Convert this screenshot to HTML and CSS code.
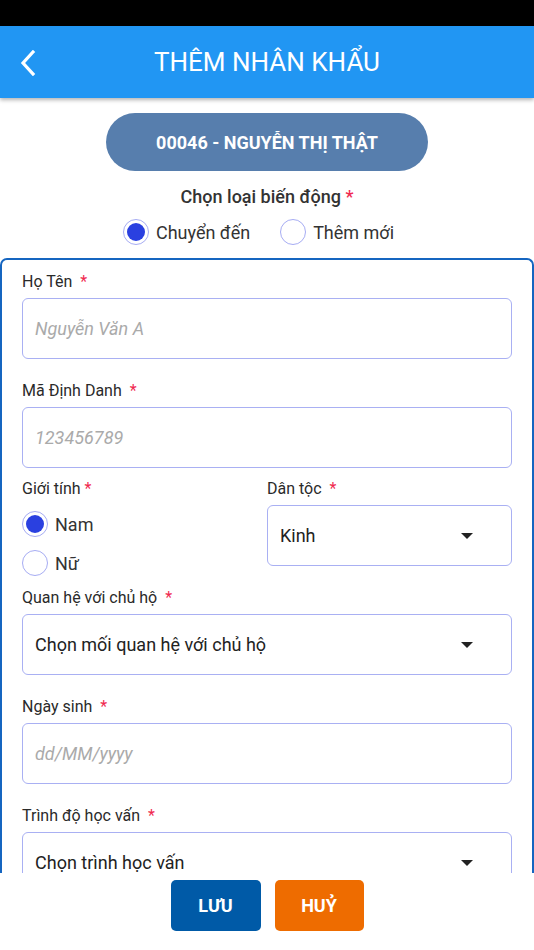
FILE: index.html
```html
<!DOCTYPE html>
<html lang="vi">
<head>
  <meta charset="UTF-8">
  <title>Thêm nhân khẩu</title>
  <meta name="viewport" content="width=device-width, initial-scale=1.0">
  <link rel="stylesheet" href="styles.css">
</head>
<body>
  <div class="screen">
    <div class="status-bar"></div>

    <div class="header">
      <a class="back" href="#">
        <svg width="16" height="26" viewBox="0 0 16 26"><path d="M13 2 L3 13 L13 24" fill="none" stroke="#fff" stroke-width="3.2" stroke-linecap="square"/></svg>
      </a>
      <h1>THÊM NHÂN KHẨU</h1>
    </div>

    <div class="content">
      <div class="household">00046 - NGUYỄN THỊ THẬT</div>

      <div class="type-title">Chọn loại biến động <span class="req">*</span></div>
      <div class="type-options">
        <label class="radio"><span class="dot checked"></span>Chuyển đến</label>
        <label class="radio"><span class="dot"></span>Thêm mới</label>
      </div>

      <div class="card">
        <div class="field">
          <div class="label">Họ Tên <span class="req gap">*</span></div>
          <div class="input placeholder">Nguyễn Văn A</div>
        </div>

        <div class="field tight">
          <div class="label">Mã Định Danh <span class="req gap">*</span></div>
          <div class="input placeholder">123456789</div>
        </div>

        <div class="field split">
          <div class="col">
            <div class="label">Giới tính <span class="req">*</span></div>
            <div class="gender">
              <label class="radio"><span class="dot checked"></span>Nam</label>
              <label class="radio"><span class="dot"></span>Nữ</label>
            </div>
          </div>
          <div class="col">
            <div class="label">Dân tộc <span class="req gap">*</span></div>
            <div class="input select">Kinh<span class="caret"></span></div>
          </div>
        </div>

        <div class="field">
          <div class="label">Quan hệ với chủ hộ <span class="req gap">*</span></div>
          <div class="input select">Chọn mối quan hệ với chủ hộ<span class="caret"></span></div>
        </div>

        <div class="field">
          <div class="label">Ngày sinh <span class="req gap">*</span></div>
          <div class="input placeholder">dd/MM/yyyy</div>
        </div>

        <div class="field">
          <div class="label">Trình độ học vấn <span class="req gap">*</span></div>
          <div class="input select">Chọn trình học vấn<span class="caret"></span></div>
        </div>
      </div>
    </div>

    <div class="footer">
      <button class="btn save">LƯU</button>
      <button class="btn cancel">HUỶ</button>
    </div>
  </div>
</body>
</html>
```

FILE: styles.css
```css
* {
  box-sizing: border-box;
}
body {
  margin: 0;
  background-color: #fff;
  font-family: Roboto, "Noto Sans", Arial, sans-serif;
  color: #333;
}
.screen {
  width: 534px;
  height: 950px;
  display: flex;
  flex-direction: column;
  overflow: hidden;
}
.status-bar {
  height: 26px;
  background-color: #000;
  flex-shrink: 0;
}
.header {
  height: 72px;
  background-color: #2196f3;
  display: flex;
  align-items: center;
  justify-content: center;
  position: relative;
  box-shadow: 0 2px 4px rgba(0,0,0,0.3);
  flex-shrink: 0;
  z-index: 2;
}
.header h1 {
  margin: 0;
  color: #fff;
  font-size: 26px;
  font-weight: 400;
}
.back {
  position: absolute;
  left: 20px;
  top: 24px;
  display: block;
  line-height: 0;
}
.content {
  flex: 1;
  overflow: hidden;
  display: flex;
  flex-direction: column;
  align-items: center;
}
.household {
  margin-top: 15px;
  width: 322px;
  height: 58px;
  border-radius: 29px;
  background-color: #577ead;
  color: #fff;
  font-size: 18px;
  font-weight: 700;
  display: flex;
  align-items: center;
  justify-content: center;
  flex-shrink: 0;
}
.type-title {
  margin-top: 15px;
  font-size: 18px;
  line-height: 22px;
  font-weight: 500;
  color: #333;
  flex-shrink: 0;
}
.req {
  color: #f0294f;
}
.req.gap {
  margin-left: 4px;
}
.type-options {
  margin-top: 11px;
  display: flex;
  gap: 30px;
  padding-right: 17px;
  flex-shrink: 0;
}
.radio {
  display: flex;
  align-items: center;
  font-size: 18px;
  color: #333;
  height: 26px;
}
.dot {
  width: 26px;
  height: 26px;
  border: 1px solid #a6acf3;
  border-radius: 50%;
  margin-right: 7px;
  position: relative;
  background-color: #fff;
}
.dot.checked::after {
  content: "";
  position: absolute;
  left: 3px;
  top: 3px;
  width: 18px;
  height: 18px;
  border-radius: 50%;
  background-color: #2a40e0;
}
.card {
  margin-top: 13px;
  width: 534px;
  align-self: flex-start;
  border: 2px solid #1565c0;
  border-bottom: none;
  border-radius: 7px 7px 0 0;
  padding: 12px 20px 0 20px;
  flex-shrink: 0;
}
.field {
  margin-bottom: 22px;
}
.field.tight {
  margin-bottom: 11px;
}
.label {
  font-size: 16px;
  line-height: 20px;
  font-weight: 400;
  color: #2a2a2a;
  margin-bottom: 6px;
}
.input {
  height: 61px;
  border: 1.5px solid #a9b0f3;
  border-radius: 6px;
  padding: 0 12px;
  display: flex;
  align-items: center;
  font-size: 18px;
  color: #222;
  position: relative;
}
.placeholder {
  color: #aaa;
  font-style: italic;
}
.caret {
  position: absolute;
  right: 38px;
  top: 50%;
  margin-top: -3px;
  width: 0;
  height: 0;
  border-left: 6px solid transparent;
  border-right: 6px solid transparent;
  border-top: 6px solid #222;
}
.field.split {
  display: flex;
  margin-bottom: 12px;
}
.split .col {
  flex: 1;
}
.split .col:last-child {
  flex: 0 0 245px;
}
.gender {
  margin-top: 12px;
  display: flex;
  flex-direction: column;
  gap: 13px;
}
.footer {
  height: 77px;
  background-color: #fff;
  display: flex;
  justify-content: center;
  align-items: flex-start;
  gap: 14px;
  padding-top: 7px;
  flex-shrink: 0;
}
.btn {
  width: 90px;
  height: 51px;
  border: none;
  border-radius: 5px;
  color: #fff;
  font-family: Roboto, Arial, sans-serif;
  font-size: 18px;
  font-weight: 700;
}
.save {
  background-color: #005aa7;
}
.cancel {
  background-color: #ee6c00;
  width: 89px;
}
```
